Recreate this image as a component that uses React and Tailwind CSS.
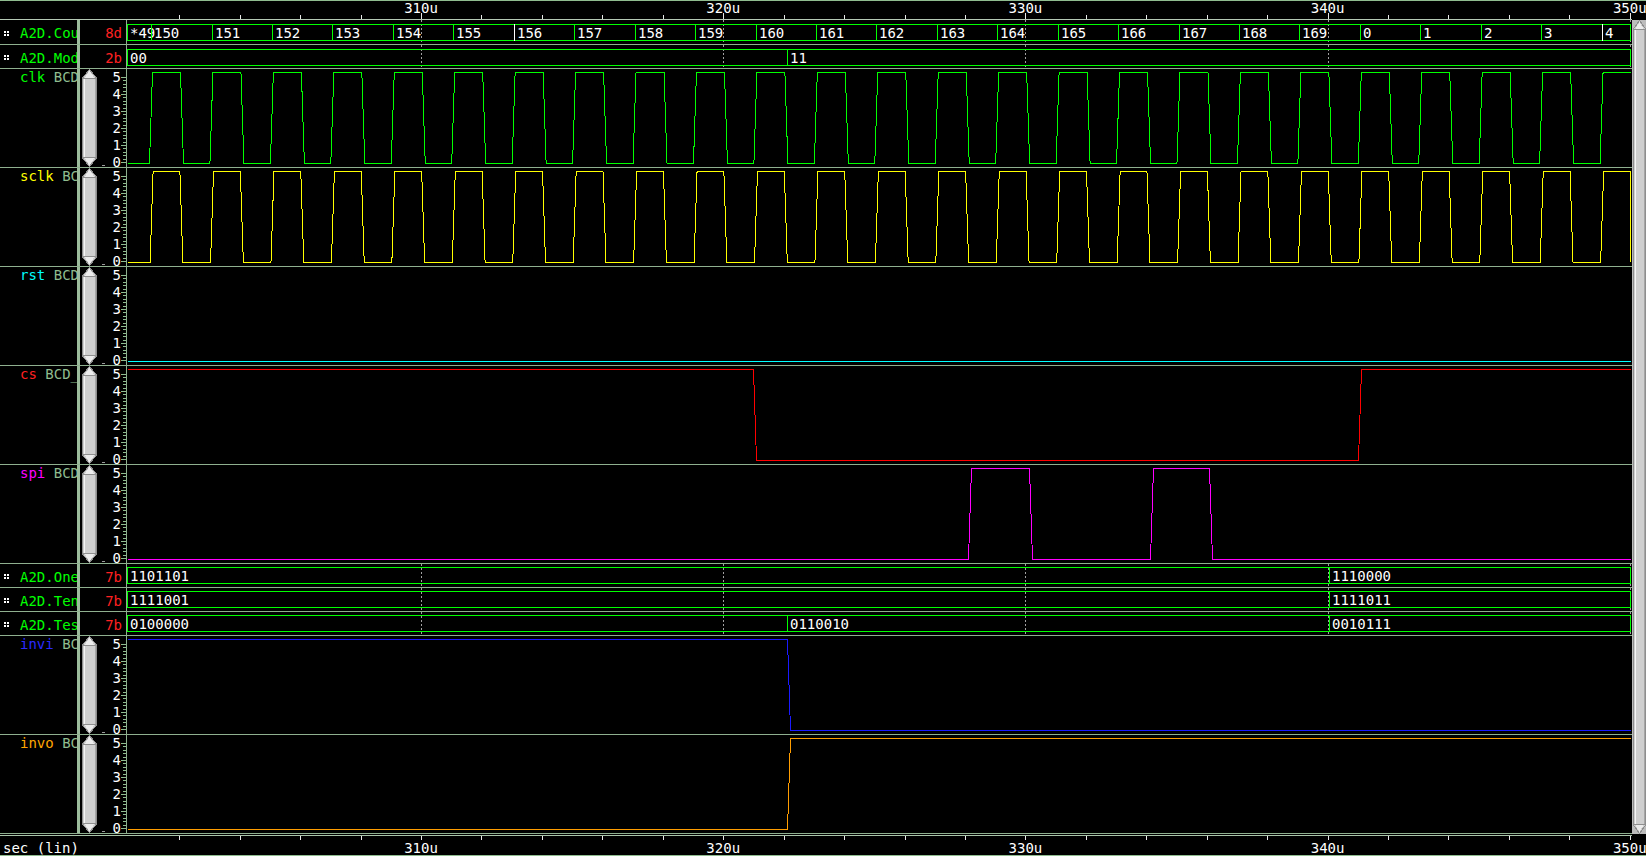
import React from 'react';

const PX = 30.22;
const gx = (t) => 421 + (t - 310) * PX;
const WAVE_L = 127;
const lx = (t) => gx(t) - WAVE_L;
const WAVE_W = 1505;
const END = 1503;
const GRID = [310, 320, 330, 340, 350].map((t) => Math.round(lx(t)));

function wavePoints(startHigh, edges) {
  const H = 3.5, L = 94.5;
  let hi = startHigh;
  const pts = [[0.5, hi ? H : L]];
  for (const e of edges) {
    if (e >= END) break;
    pts.push([e + 0.5, hi ? H : L]);
    hi = !hi;
    pts.push([Math.min(e + 3, END) + 0.5, hi ? H : L]);
  }
  pts.push([END + 0.5, hi ? H : L]);
  return pts.map((p) => p.join(',')).join(' ');
}

const clkEdges = [];
for (let k = 0; k < 30; k++) {
  clkEdges.push(22 + 60.44 * k);
  clkEdges.push(53 + 60.44 * k);
}
const sclkEdges = [];
for (let k = 0; k < 30; k++) {
  sclkEdges.push(22.6 + 60.44 * k);
  sclkEdges.push(52.4 + 60.44 * k);
}

const countSegs = [{ x: 0, l: '*49' }];
for (let k = 0; k < 25; k++) {
  countSegs.push({
    x: 24.1 + 60.44 * k,
    l: k < 20 ? String(150 + k) : String(k - 20),
    white: k === 6 || k === 24,
  });
}

function PencilShape({ x = 0, w, h }) {
  const m = x + w / 2;
  const r = x + w - 0.5;
  const l = x + 0.5;
  const t = 9;
  return (
    <g>
      <polygon
        points={`${m},0.5 ${r},${t} ${r},${h - t} ${m},${h - 0.5} ${l},${h - t} ${l},${t}`}
        fill="#cfcfcf"
        stroke="#8e8e8e"
      />
      <polygon points={`${m},2 ${r - 2},${t} ${l + 2},${t}`} fill="#ececec" />
      <line x1={l + 1.5} x2={l + 1.5} y1={t + 1} y2={h - t - 1} stroke="#f4f4f4" />
      <line x1={r - 1.5} x2={r - 1.5} y1={t + 1} y2={h - t - 1} stroke="#a6a6a6" />
      <line x1={l} x2={r} y1={t + 0.5} y2={t + 0.5} stroke="#8e8e8e" />
      <line x1={l} x2={r} y1={h - t - 0.5} y2={h - t - 0.5} stroke="#8e8e8e" />
      <polygon points={`${l + 2},${h - t} ${r - 2},${h - t} ${m},${h - 2}`} fill="#ececec" />
    </g>
  );
}

function AxisCell() {
  const ticks = [];
  for (let i = 0; i <= 25; i++) {
    const y = Math.round(93 - (i * 17) / 5) + 0.5;
    const major = i % 5 === 0;
    ticks.push(
      <line key={i} x1={major ? 41 : 43} x2={46} y1={y} y2={y} stroke="#8fbc8f" />
    );
  }
  return (
    <svg width="46" height="98" overflow="visible" shapeRendering="crispEdges">
      <PencilShape x={2} w={15} h={98} />
      <rect x="22" y="96" width="3" height="1" fill="#9a9a9a" />
      {[0, 1, 2, 3, 4, 5].map((v) => (
        <text key={v} x="41" y={93 - v * 17 + 5} textAnchor="end" fill="#ffffff" fontSize="14">
          {v}
        </text>
      ))}
      {ticks}
    </svg>
  );
}

function Grip() {
  return (
    <div className="grid grid-cols-2 gap-[1px] shrink-0">
      <div className="w-[2px] h-[2px] bg-white" />
      <div className="w-[2px] h-[2px] bg-white" />
      <div className="w-[2px] h-[2px] bg-white" />
      <div className="w-[2px] h-[2px] bg-white" />
    </div>
  );
}

function BusRow({ name, fmt, segs, hCls, ch, boxTop }) {
  return (
    <div className={`flex border-b border-[#8fb08f] ${hCls}`}>
      <div className="w-[77px] shrink-0 overflow-hidden whitespace-nowrap flex items-center pl-[4px] pt-[2px]">
        <Grip />
        <span className="ml-[11px] shrink-0 text-[#00ff00]">{name}</span>
      </div>
      <div className="w-[3px] shrink-0 bg-[#9cbc9c]" />
      <div className="w-[46px] shrink-0 flex items-center justify-end pr-[4px] pt-[2px] text-[#ff2020]">{fmt}</div>
      <div className="w-px shrink-0 bg-[#8fb08f]" />
      <svg width={WAVE_W} height={ch} shapeRendering="crispEdges">
        {GRID.map((x) => (
          <line key={x} x1={x + 0.5} x2={x + 0.5} y1={0} y2={ch} stroke="#a0a0a0" strokeDasharray="2 2" />
        ))}
        <rect x={0.5} y={boxTop + 0.5} width={END} height={16} fill="none" stroke="#00ff00" />
        {segs.map((s, i) => {
          const x = Math.round(s.x);
          return (
            <g key={i}>
              {i > 0 && (
                <line
                  x1={x + 0.5}
                  x2={x + 0.5}
                  y1={boxTop}
                  y2={boxTop + 17}
                  stroke={s.white ? '#ffffff' : '#00ff00'}
                />
              )}
              <text x={x + 3} y={boxTop + 14} fill="#ffffff" fontSize="14">
                {s.l}
              </text>
            </g>
          );
        })}
      </svg>
    </div>
  );
}

function AnalogRow({ name, nameCls, rest, color, pts }) {
  return (
    <div className="flex h-[99px] border-b border-[#8fb08f]">
      <div className="w-[77px] shrink-0 overflow-hidden whitespace-nowrap pl-[20px]">
        <span className={nameCls}>{name}</span> <span className="text-[#8fbc8f]">{rest}</span>
      </div>
      <div className="w-[3px] shrink-0 bg-[#9cbc9c]" />
      <div className="w-[46px] shrink-0">
        <AxisCell />
      </div>
      <div className="w-px shrink-0 bg-[#8fb08f]" />
      <svg width={WAVE_W} height={98} shapeRendering="crispEdges">
        <polyline points={pts} fill="none" stroke={color} strokeWidth="1" />
      </svg>
    </div>
  );
}

function rulerTicks() {
  const arr = [];
  for (let t = 302; t <= 350; t += 2) {
    arr.push({ t, x: Math.round(gx(t)) + 0.5, major: t % 10 === 0 });
  }
  return arr;
}

function TopRuler() {
  const ticks = rulerTicks();
  return (
    <svg width="1646" height="19" overflow="visible" className="shrink-0" shapeRendering="crispEdges">
      <line x1="0" x2="1632" y1="18.5" y2="18.5" stroke="#b4c8b4" />
      {ticks.map((k) => (
        <line key={k.t} x1={k.x} x2={k.x} y1={k.major ? 12 : 14} y2={18} stroke="#e8e8e8" />
      ))}
      {ticks
        .filter((k) => k.major)
        .map((k) => (
          <text key={'l' + k.t} x={gx(k.t)} y="11.5" textAnchor="middle" fill="#ffffff" fontSize="14">
            {k.t}u
          </text>
        ))}
    </svg>
  );
}

function BottomRuler() {
  const ticks = rulerTicks();
  return (
    <svg width="1646" height="22" className="shrink-0" shapeRendering="crispEdges">
      <line x1="0" x2="1632" y1="1.5" y2="1.5" stroke="#a8c4a8" />
      {ticks.map((k) => (
        <line key={k.t} x1={k.x} x2={k.x} y1={2} y2={6} stroke="#e8e8e8" />
      ))}
      <text x="3" y="19" fill="#ffffff" fontSize="14">
        sec (lin)
      </text>
      {ticks
        .filter((k) => k.major)
        .map((k) => (
          <text key={'l' + k.t} x={gx(k.t)} y="19" textAnchor="middle" fill="#ffffff" fontSize="14">
            {k.t}u
          </text>
        ))}
      <line x1="0" x2="1646" y1="21.5" y2="21.5" stroke="#8fbc8f" />
    </svg>
  );
}

const clkPts = wavePoints(false, clkEdges);
const sclkPts = wavePoints(false, sclkEdges);
const rstPts = wavePoints(false, []);
const csPts = wavePoints(true, [626, 1231]);
const spiPts = wavePoints(false, [841, 902, 1023, 1082]);
const inviPts = wavePoints(true, [660]);
const invoPts = wavePoints(false, [660]);

export default function App() {
  return (
    <div className="w-[1646px] h-[856px] bg-black overflow-hidden border-t border-[#8fbc8f] flex flex-col font-['DejaVu_Sans_Mono','Liberation_Mono',monospace] text-[14px] leading-[16px] text-white">
      <TopRuler />
      <div className="flex h-[814px] shrink-0">
        <div className="w-[1632px] flex flex-col">
          <BusRow name="A2D.Count" fmt="8d" segs={countSegs} hCls="h-[25px]" ch={24} boxTop={4} />
          <BusRow
            name="A2D.Mode"
            fmt="2b"
            segs={[
              { x: 0, l: '00' },
              { x: 660, l: '11' },
            ]}
            hCls="h-[24px]"
            ch={23}
            boxTop={4}
          />
          <AnalogRow name="clk" nameCls="text-[#00ff00]" rest="BCD_Counter" color="#00ff00" pts={clkPts} />
          <AnalogRow name="sclk" nameCls="text-[#ffff00]" rest="BCD_Counter" color="#ffff00" pts={sclkPts} />
          <AnalogRow name="rst" nameCls="text-[#00ffff]" rest="BCD_Counter" color="#00ffff" pts={rstPts} />
          <AnalogRow name="cs" nameCls="text-[#ff2020]" rest="BCD_Counter" color="#ff0000" pts={csPts} />
          <AnalogRow name="spi" nameCls="text-[#ff00ff]" rest="BCD_Counter" color="#ff00ff" pts={spiPts} />
          <BusRow
            name="A2D.Ones"
            fmt="7b"
            segs={[
              { x: 0, l: '1101101' },
              { x: 1202, l: '1110000' },
            ]}
            hCls="h-[24px]"
            ch={23}
            boxTop={3}
          />
          <BusRow
            name="A2D.Tens"
            fmt="7b"
            segs={[
              { x: 0, l: '1111001' },
              { x: 1202, l: '1111011' },
            ]}
            hCls="h-[24px]"
            ch={23}
            boxTop={3}
          />
          <BusRow
            name="A2D.Test"
            fmt="7b"
            segs={[
              { x: 0, l: '0100000' },
              { x: 660, l: '0110010' },
              { x: 1202, l: '0010111' },
            ]}
            hCls="h-[24px]"
            ch={23}
            boxTop={3}
          />
          <AnalogRow name="invi" nameCls="text-[#2a2aff]" rest="BCD_Counter" color="#1a1aff" pts={inviPts} />
          <AnalogRow name="invo" nameCls="text-[#ffa500]" rest="BCD_Counter" color="#ff9d00" pts={invoPts} />
        </div>
        <div className="w-[14px] shrink-0 bg-[#bcbcbc]">
          <svg width="14" height="814" shapeRendering="crispEdges">
            <PencilShape x={1} w={13} h={814} />
          </svg>
        </div>
      </div>
      <BottomRuler />
    </div>
  );
}
